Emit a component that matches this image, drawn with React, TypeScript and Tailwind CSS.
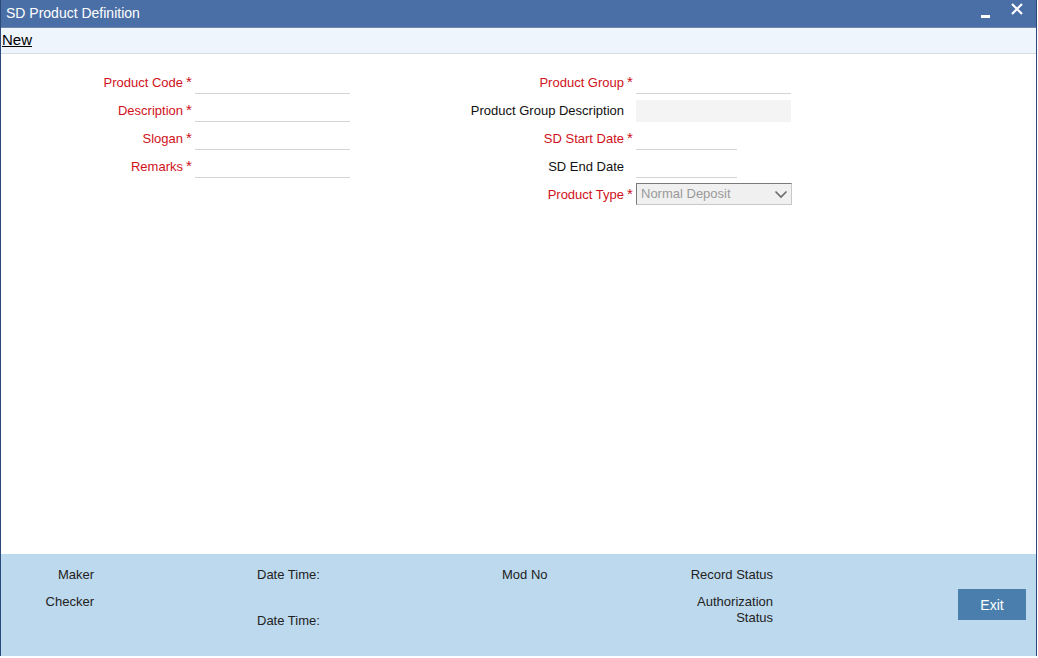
const font = { fontFamily: '"Liberation Sans", Arial, sans-serif' };

type Field = {
  label: string;
  required?: boolean;
  kind: 'line' | 'short' | 'readonly' | 'select';
};

const leftFields: Field[] = [
  { label: 'Product Code', required: true, kind: 'line' },
  { label: 'Description', required: true, kind: 'line' },
  { label: 'Slogan', required: true, kind: 'line' },
  { label: 'Remarks', required: true, kind: 'line' },
];

const rightFields: Field[] = [
  { label: 'Product Group', required: true, kind: 'line' },
  { label: 'Product Group Description', kind: 'readonly' },
  { label: 'SD Start Date', required: true, kind: 'short' },
  { label: 'SD End Date', kind: 'short' },
  { label: 'Product Type', required: true, kind: 'select' },
];

function FieldInput({ kind }: { kind: Field['kind'] }) {
  if (kind === 'readonly') {
    return <div className="h-[22px] w-[155px] bg-[#f4f4f4]" />;
  }
  if (kind === 'short') {
    return <div className="h-[22px] w-[101px] border-b border-[#d4d4d4]" />;
  }
  if (kind === 'select') {
    return (
      <div className="-mt-[2px] flex h-[22px] w-[156px] items-center justify-between border border-t-[#7a7a7a] border-l-[#7a7a7a] border-r-[#c8c8c8] border-b-[#c8c8c8] bg-[#f0f0f0] pr-[3px] pl-[4px]">
        <span className="text-[13px] text-[#9a9a9a]">Normal Deposit</span>
        <svg width="14" height="9" viewBox="0 0 14 9">
          <polyline points="1.5,1.5 7,7 12.5,1.5" fill="none" stroke="#6a6a6a" strokeWidth="1.6" />
        </svg>
      </div>
    );
  }
  return <div className="h-[22px] w-[155px] border-b border-[#d4d4d4]" />;
}

function FieldRow({ field, labelWidth }: { field: Field; labelWidth: string }) {
  return (
    <div className="flex h-[28px] items-center">
      <div
        className={`${labelWidth} text-right text-[13px] ${field.required ? 'text-[#d0111b]' : 'text-[#111]'}`}
      >
        {field.label}
      </div>
      <div className="w-[12px] self-start pt-[5px] pl-[3px] text-[15px] leading-[15px] text-[#d0111b]">
        {field.required ? '*' : ''}
      </div>
      <FieldInput kind={field.kind} />
    </div>
  );
}

export default function App() {
  return (
    <div className="bg-white" style={font}>
      <div className="flex h-[656px] w-[1037px] flex-col border-x border-[#2b4a7c]">
        {/* title bar */}
        <div className="flex h-[28px] items-center justify-between border-b border-[#6f88ab] bg-[#4a6fa6] pl-[5px]">
          <span className="text-[14px] text-white">SD Product Definition</span>
          <div className="flex items-center">
            <div className="mt-[5px] h-[3px] w-[9px] bg-white" />
            <svg width="12" height="12" viewBox="0 0 12 12" className="mr-[13px] ml-[21px] mb-[10px]">
              <path d="M1 1 L11 11 M11 1 L1 11" stroke="white" strokeWidth="2.2" />
            </svg>
          </div>
        </div>

        {/* toolbar */}
        <div className="flex h-[26px] items-center border-b border-[#d9dde3] bg-[#eef5fd] pl-[1px]">
          <span className="text-[15px] text-black underline">New</span>
        </div>

        {/* form body */}
        <div className="flex flex-1 pt-[15px]">
          <div className="flex flex-col">
            {leftFields.map((f) => (
              <FieldRow key={f.label} field={f} labelWidth="w-[182px]" />
            ))}
          </div>
          <div className="flex flex-col">
            {rightFields.map((f) => (
              <FieldRow key={f.label} field={f} labelWidth="w-[274px]" />
            ))}
          </div>
        </div>

        {/* audit footer */}
        <div className="flex h-[102px] bg-[#bdd9ee] pt-[13px] text-[13px] leading-[16px] text-[#222]">
          <div className="flex w-[93px] flex-col text-right">
            <span>Maker</span>
            <span className="mt-[11px]">Checker</span>
          </div>
          <div className="ml-[163px] flex w-[245px] flex-col">
            <span>Date Time:</span>
            <span className="mt-[30px]">Date Time:</span>
          </div>
          <div className="w-[100px]">Mod No</div>
          <div className="flex w-[171px] flex-col text-right">
            <span>Record Status</span>
            <span className="mt-[11px]">
              Authorization
              <br />
              Status
            </span>
          </div>
          <button
            type="button"
            className="mt-[22px] ml-[185px] h-[31px] w-[68px] self-start bg-[#4a7fad] text-[14px] text-white"
          >
            Exit
          </button>
        </div>
      </div>
    </div>
  );
}
